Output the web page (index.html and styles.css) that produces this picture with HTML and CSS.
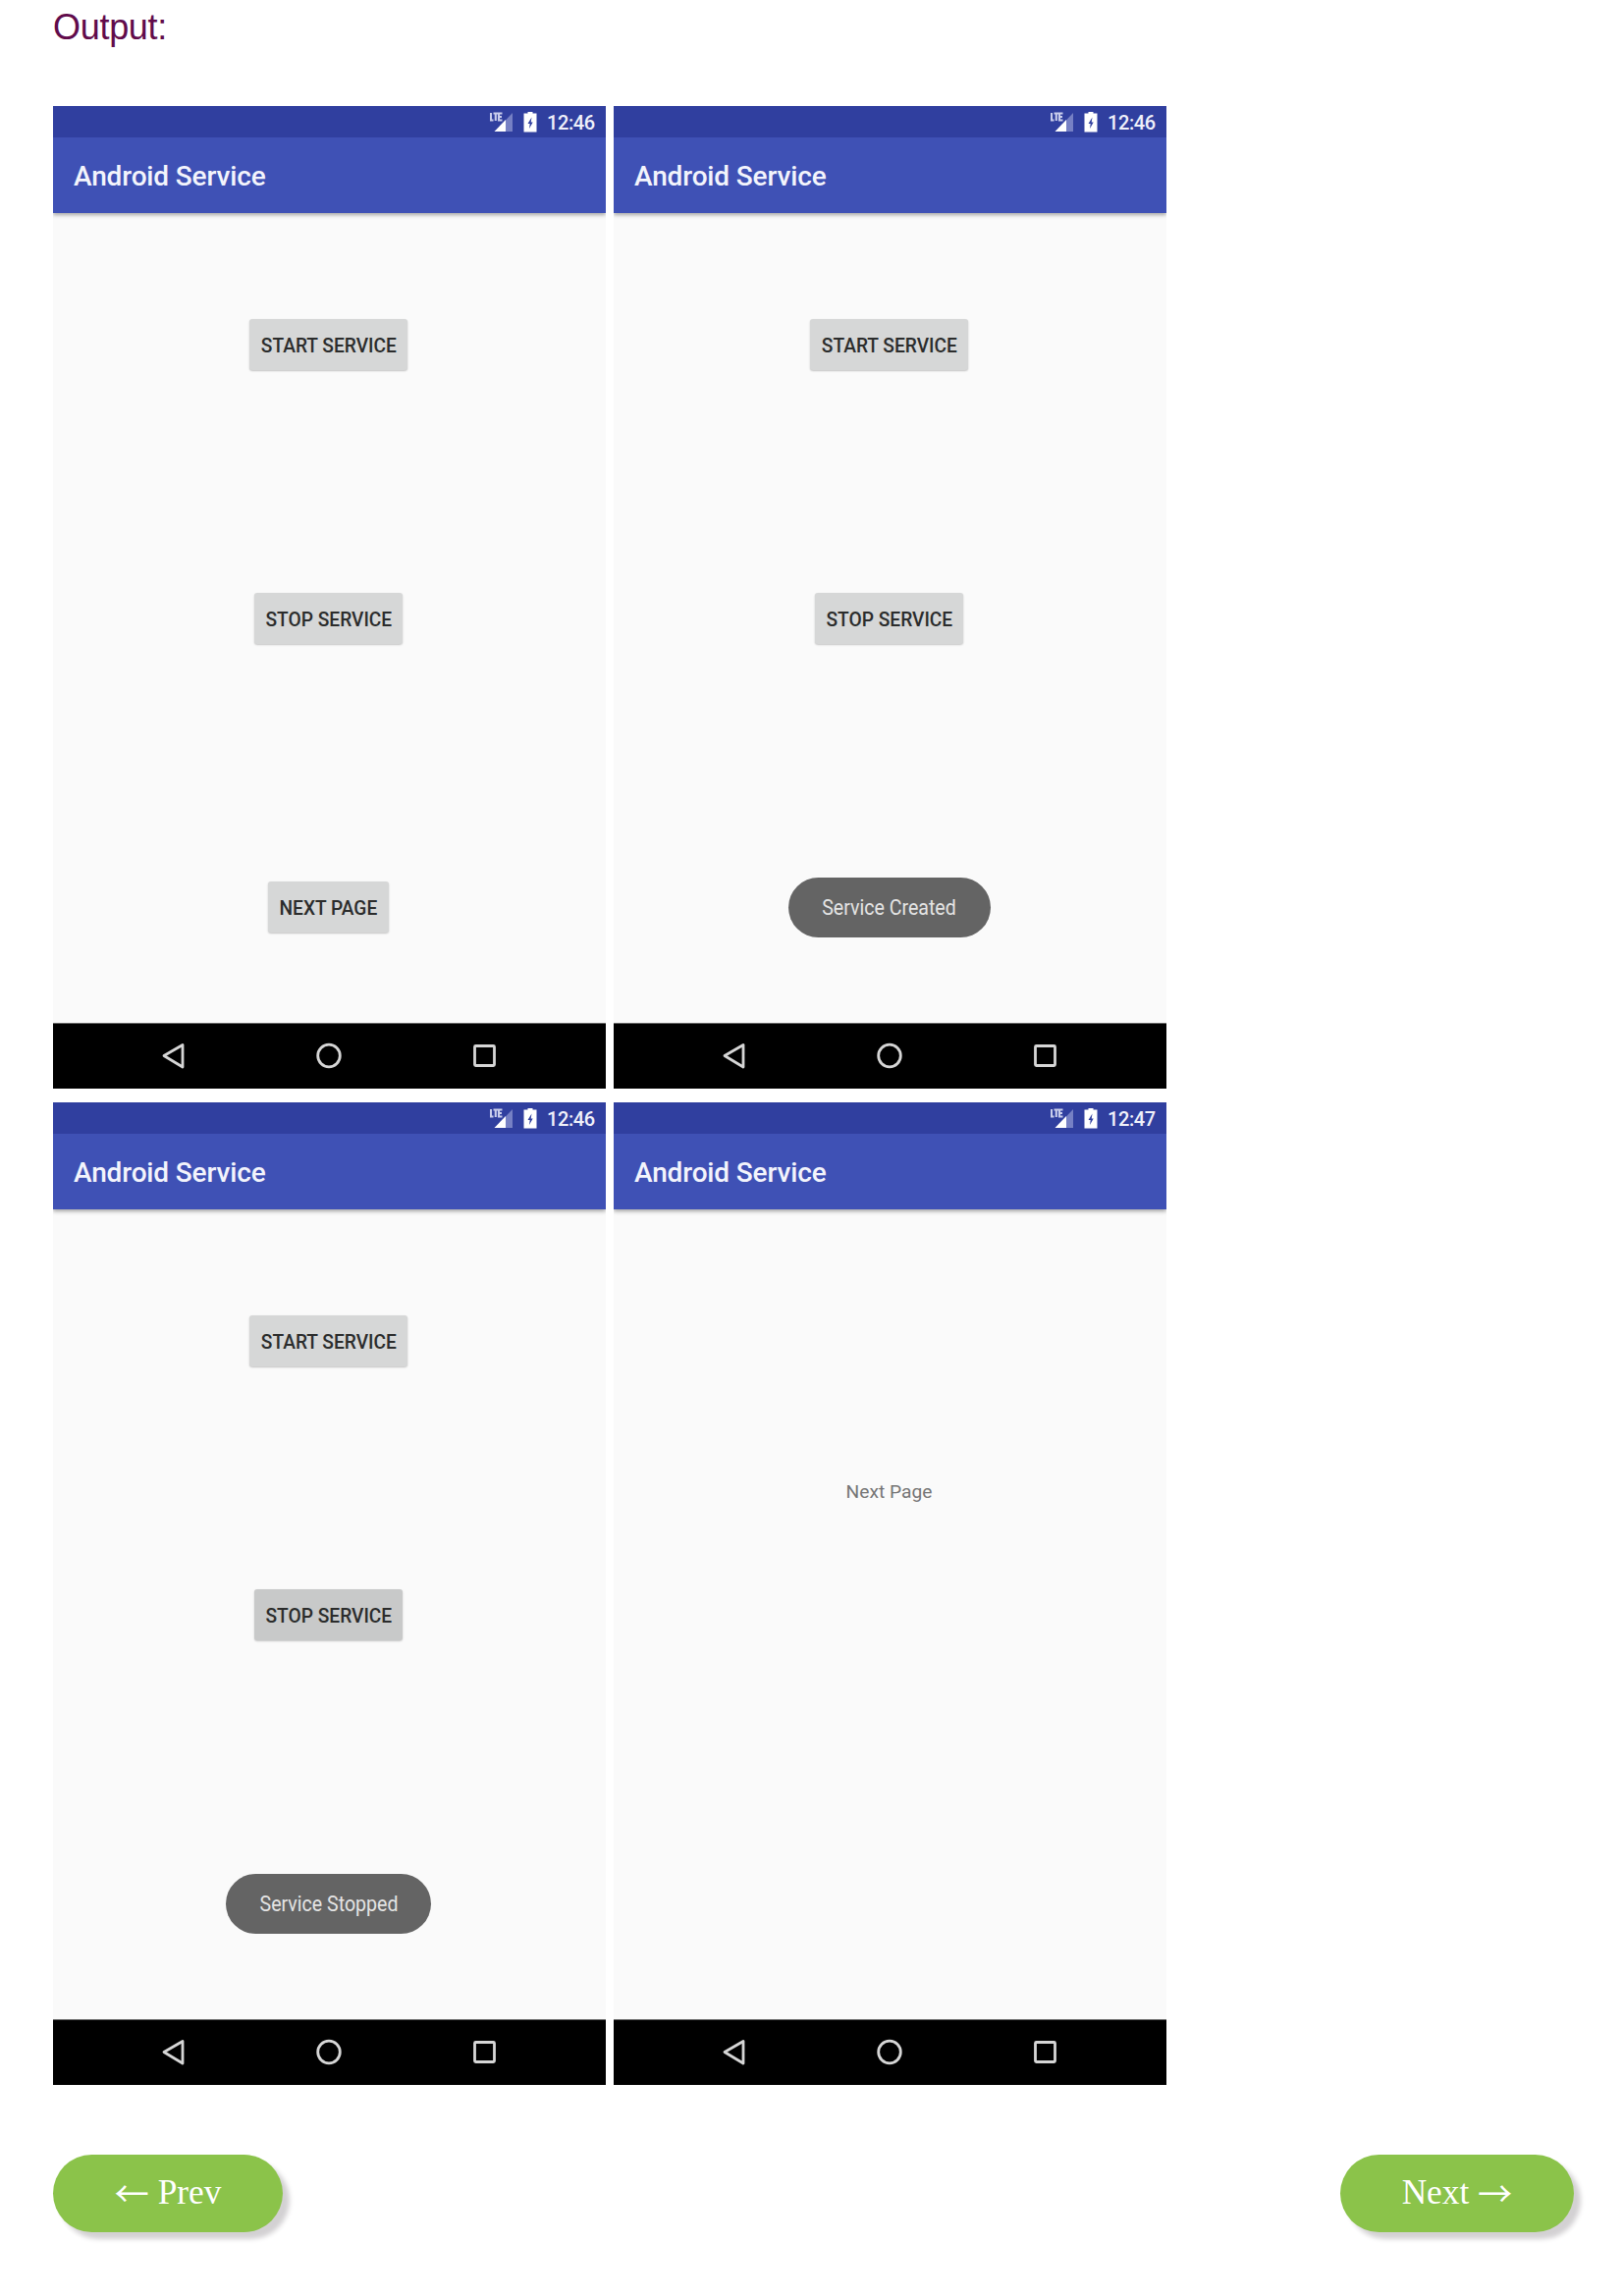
FILE: index.html
```
<!DOCTYPE html>
<html lang="en">
<head>
<meta charset="utf-8">
<title>Android Service</title>
<link rel="stylesheet" href="styles.css">
</head>
<body>
<svg class="defs" width="0" height="0">
  <symbol id="signal" viewBox="0 0 24 21">
    <path d="M23 1v19H5z" fill="#7680c4"/>
    <path d="M16 8v12H4.500z" fill="#fff"/>
    <path d="M1 1v7.500h2.500M3.500 1.500h4.500M5.800 1.500v7.500M12.500 1.500H9v7H12.500M9 5H12" fill="none" stroke="#c9cdec" stroke-width="2.100"/>
  </symbol>
  <symbol id="battery" viewBox="0 0 14 21">
    <path d="M4.500 0h5v1.500H13.500v19H0.500v-19h4z" fill="#fff"/>
    <path d="M8.500 5.500L4.500 12h2.200L6 17L9.700 10.500H7.700z" fill="#303f9f"/>
  </symbol>
  <symbol id="nav" viewBox="0 0 563 66">
    <g fill="none" stroke="#d6d6d6" stroke-width="2.800" stroke-linejoin="round">
      <path d="M113 32.500L132 21.500v22.500z"/>
      <circle cx="281" cy="32.500" r="11.300"/>
      <rect x="429.500" y="22.500" width="20" height="20" rx="1"/>
    </g>
  </symbol>
</svg>
<h2 class="heading">Output:</h2>
<main class="screens">
  <section class="phone">
    <div class="status"><svg class="signal"><use href="#signal"/></svg><svg class="battery"><use href="#battery"/></svg><span class="time">12:46</span></div>
    <header class="appbar"><span class="title">Android Service</span></header>
    <div class="content">
      <div class="btn start"><span>START SERVICE</span></div>
      <div class="btn stop"><span>STOP SERVICE</span></div>
      <div class="btn next-page"><span>NEXT PAGE</span></div>
    </div>
    <svg class="navbar"><use href="#nav"/></svg>
  </section>
  <section class="phone">
    <div class="status"><svg class="signal"><use href="#signal"/></svg><svg class="battery"><use href="#battery"/></svg><span class="time">12:46</span></div>
    <header class="appbar"><span class="title">Android Service</span></header>
    <div class="content">
      <div class="btn start"><span>START SERVICE</span></div>
      <div class="btn stop"><span>STOP SERVICE</span></div>
      <div class="toast created"><span>Service Created</span></div>
    </div>
    <svg class="navbar"><use href="#nav"/></svg>
  </section>
  <section class="phone">
    <div class="status"><svg class="signal"><use href="#signal"/></svg><svg class="battery"><use href="#battery"/></svg><span class="time">12:46</span></div>
    <header class="appbar"><span class="title">Android Service</span></header>
    <div class="content">
      <div class="btn start"><span>START SERVICE</span></div>
      <div class="btn stop pressed"><span>STOP SERVICE</span></div>
      <div class="toast stopped"><span>Service Stopped</span></div>
    </div>
    <svg class="navbar"><use href="#nav"/></svg>
  </section>
  <section class="phone">
    <div class="status"><svg class="signal"><use href="#signal"/></svg><svg class="battery"><use href="#battery"/></svg><span class="time">12:47</span></div>
    <header class="appbar"><span class="title">Android Service</span></header>
    <div class="content">
      <div class="label">Next Page</div>
    </div>
    <svg class="navbar"><use href="#nav"/></svg>
  </section>
</main>
<nav class="pager">
  <a class="pill"><span class="arrow">←</span> Prev</a>
  <a class="pill">Next <span class="arrow">→</span></a>
</nav>
</body>
</html>
```
FILE: styles.css
```
* { box-sizing: border-box; }
body {
  margin: 0;
  padding: 7px 50px 0 54px;
  min-height: 2339px;
  background: #fff;
  font-family: Roboto, "Liberation Sans", sans-serif;
}
.defs { display: block; height: 0; }
.heading {
  margin: 0 0 61px;
  height: 40px;
  font: 400 36px/41px "Liberation Sans", Arial, sans-serif;
  letter-spacing: -0.3px;
  color: #610b4b;
}
.screens {
  display: grid;
  grid-template-columns: 563px 563px;
  gap: 14px 8px;
}
.phone {
  display: flex;
  flex-direction: column;
  height: 1001px;
  background: #fafafa;
}
.status {
  display: flex;
  align-items: center;
  justify-content: flex-end;
  flex: none;
  height: 32px;
  padding: 1px 11px 0 0;
  background: #303f9f;
  color: #f0f1fa;
}
.signal { width: 24px; height: 21px; margin-right: 10px; }
.battery { width: 14px; height: 21px; margin-right: 10px; }
.time { width: 49px; font-size: 20px; font-weight: 500; letter-spacing: -0.4px; line-height: 30px; white-space: nowrap; }
.appbar {
  display: flex;
  align-items: center;
  flex: none;
  height: 77px;
  padding: 2px 0 0 21px;
  background: #3f51b5;
  box-shadow: 0 2px 4px rgba(0, 0, 0, .35);
  clip-path: inset(0 0 -8px 0);
}
.title { font-size: 28px; font-weight: 500; letter-spacing: -0.15px; line-height: 32px; color: #f3f4fc; }
.content {
  display: flex;
  flex-direction: column;
  align-items: center;
  flex: 1;
  padding-right: 2px;
}
.btn {
  display: flex;
  justify-content: center;
  flex: none;
  height: 52px;
  line-height: 54px;
  border-radius: 3px;
  background: #d6d7d7;
  box-shadow: 0 1px 2px rgba(0, 0, 0, .22);
  color: #2b2c2c;
  font-size: 20.5px;
  font-weight: 500;
  white-space: nowrap;
}
.btn span { transform: scaleX(.935); }
.start { width: 161px; margin-top: 108px; }
.stop { width: 151px; margin-top: 227px; }
.pressed { background: #c8c9c9; }
.next-page { width: 123px; margin-top: 242px; }
.toast {
  display: flex;
  align-items: center;
  justify-content: center;
  flex: none;
  height: 61px;
  margin-top: 238px;
  border-radius: 31px;
  background: #646464;
  color: #e4e4e4;
  font-size: 22.5px;
  line-height: 27px;
  white-space: nowrap;
}
.toast span { transform: scaleX(.87); }
.created { width: 206px; }
.stopped { width: 209px; }
.label { margin-top: 275px; font-size: 19.2px; line-height: 26px; color: #757575; }
.navbar {
  display: block;
  flex: none;
  width: 563px;
  height: 67px;
  border-top: 1px solid #666;
  background: #000;
}
.pager {
  display: flex;
  justify-content: space-between;
  margin-top: 71px;
}
.pill {
  display: block;
  width: 234px;
  height: 79px;
  border-radius: 40px;
  background: #8bc34a;
  box-shadow: 7px 7px 5px #d3d1d3;
  color: #fff;
  font: 35.3px/77px "Liberation Serif", "Times New Roman", serif;
  text-align: center;
  white-space: nowrap;
}
.pill + .pill { width: 238px; }
.arrow {
  display: inline-block;
  font-family: "Noto Sans CJK SC", sans-serif;
  line-height: 0;
  transform: translateY(3px);
}
```
